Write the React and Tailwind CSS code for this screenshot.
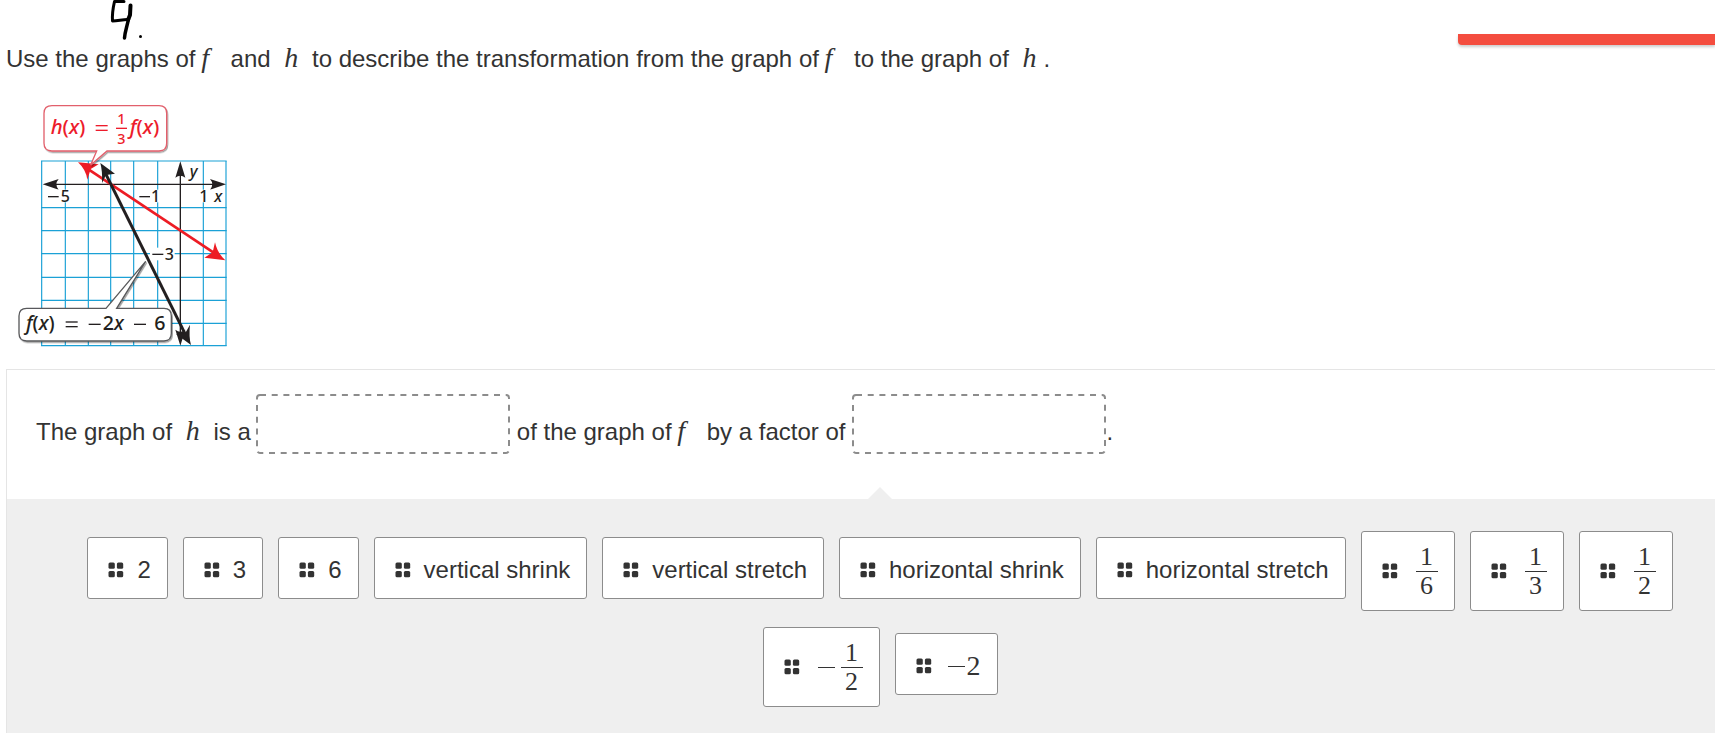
import React from "react";

const TILES = [
  { id: "two", label: "2" },
  { id: "three", label: "3" },
  { id: "six", label: "6" },
  { id: "v-shrink", label: "vertical shrink" },
  { id: "v-stretch", label: "vertical stretch" },
  { id: "h-shrink", label: "horizontal shrink" },
  { id: "h-stretch", label: "horizontal stretch" },
  { id: "sixth", fraction: [1, 6] },
  { id: "third", fraction: [1, 3] },
  { id: "half", fraction: [1, 2] },
  { id: "neg-half", negative: true, fraction: [1, 2] },
  { id: "neg-two", negative: true, math: "2" },
];

const GRID_X = [125, 196, 265, 332, 401, 473, 610, 678];
const GRID_Y = [198, 338, 407, 476, 547, 616, 685, 752];

function MathF() {
  return (
    <i className="-ml-px mr-[15px] font-['Liberation_Serif',serif] text-[28px] leading-none">f</i>
  );
}

function MathH() {
  return (
    <i className="mx-[7px] font-['Liberation_Serif',serif] text-[28px] leading-none">h</i>
  );
}

function HandwrittenNumber() {
  return (
    <svg
      className="ml-[104px] block"
      width="40"
      height="44"
      viewBox="110 0 40 44"
      fill="none"
      stroke="#000"
      strokeLinecap="round"
      strokeLinejoin="round"
      aria-label="4."
    >
      <path d="M124 1.500L114.500 1.500C113 8 112 14 112.500 21C118 21 122 19.500 127.500 19.500" strokeWidth="3" />
      <path d="M130.500 5.500L130 15L128 20" strokeWidth="4" />
      <path d="M128.500 19C127 27 125 31 124.500 38" strokeWidth="3.500" />
      <circle cx="140.500" cy="36.500" r="1.500" fill="#000" stroke="none" />
    </svg>
  );
}

function Graph() {
  return (
    <svg
      className="block font-['Noto_Sans','Open_Sans',sans-serif] font-medium"
      width="250"
      height="260"
      viewBox="0 0 750 780"
      role="img"
      aria-label="Graphs of f and h"
    >
      <defs>
        <filter id="callout" x="-10%" y="-10%" width="120%" height="130%">
          <feDropShadow dx="3" dy="4" stdDeviation="2" floodColor="#000" floodOpacity="0.35" />
        </filter>
      </defs>

      {/* Grid */}
      <g stroke="#1ba1d6" strokeWidth="3.500">
        {GRID_X.map((x) => (
          <line key={x} x1={x} x2={x} y1="198" y2="752" />
        ))}
        {GRID_Y.map((y) => (
          <line key={y} x1="123" x2="680" y1={y} y2={y} />
        ))}
      </g>

      {/* Axes */}
      <g stroke="#231f20" strokeWidth="4">
        <line x1="150" x2="660" y1="268" y2="268" />
        <line x1="541" x2="541" y1="220" y2="735" />
      </g>
      <g fill="#231f20">
        <path d="M128 268L176 252Q162 268 176 284Z" />
        <path d="M678 268L630 252Q644 268 630 284Z" />
        <path d="M541 199L526 248Q541 236 556 248Z" />
        <path d="M541 752L526 704Q541 716 556 704Z" />
      </g>

      {/* Axis labels */}
      <g fill="#fff">
        <rect x="140" y="284" width="70" height="38" />
        <rect x="413" y="284" width="68" height="38" />
        <rect x="598" y="284" width="72" height="38" />
        <rect x="450" y="458" width="74" height="38" />
        <rect x="566" y="206" width="32" height="48" />
      </g>
      <g fill="#231f20" fontSize="48">
        <text x="182" y="320">5</text>
        <text x="453" y="320">1</text>
        <text x="598" y="320">1</text>
        <text x="643" y="320" fontStyle="italic">x</text>
        <text x="569" y="245" fontStyle="italic">y</text>
        <text x="494" y="494">3</text>
        <rect x="144" y="303" width="32" height="4" />
        <rect x="418" y="303" width="32" height="4" />
        <rect x="457" y="476" width="33" height="4" />
      </g>

      {/* h(x) */}
      <line x1="252" y1="214" x2="650" y2="479" stroke="#ed1c24" strokeWidth="8" />
      <path d="M234 202L296 208L272 222L262 254Q258 224 234 202Z" fill="#ed1c24" />
      <path d="M676 496L613 488L638 472L645 442Q652 474 676 496Z" fill="#ed1c24" />

      {/* f(x) */}
      <line x1="312" y1="226" x2="562" y2="730" stroke="#231f20" strokeWidth="9" />
      <path d="M301 204L345 236L318 240L306 264Q308 230 301 204Z" fill="#231f20" />
      <path d="M573 750L528 717L556 714L570 689Q566 724 573 750Z" fill="#231f20" />

      {/* h(x) callout */}
      <path
        d="M156 32H477Q500 32 500 55V145Q500 168 477 168H321L272 210L290 168H156Q132 168 132 145V55Q132 32 156 32Z"
        fill="#fff"
        stroke="#e2606c"
        strokeWidth="4"
        filter="url(#callout)"
      />
      <g fill="#ed1c2c" fontSize="61">
        <text x="152" y="118">
          <tspan fontStyle="italic">h</tspan>(<tspan fontStyle="italic">x</tspan>)
        </text>
        <rect x="287" y="90" width="36" height="4" />
        <rect x="287" y="104" width="36" height="4" />
        <text x="352" y="88" fontSize="43">1</text>
        <text x="352" y="148" fontSize="43">3</text>
        <rect x="348" y="98" width="33" height="4" />
        <text x="389" y="118">
          <tspan fontStyle="italic">f</tspan>(<tspan fontStyle="italic">x</tspan>)
        </text>
      </g>

      {/* f(x) callout */}
      <path
        d="M80 640H318L437 499L350 640H492Q514 640 514 663V715Q514 738 492 738H80Q57 738 57 715V663Q57 640 80 640Z"
        fill="#fff"
        stroke="#58595b"
        strokeWidth="4"
        filter="url(#callout)"
      />
      <g fill="#231f20" fontSize="59">
        <text x="78" y="706">
          <tspan fontStyle="italic">f</tspan>(<tspan fontStyle="italic">x</tspan>)
        </text>
        <rect x="197" y="679" width="36" height="4" />
        <rect x="197" y="693" width="36" height="4" />
        <rect x="266" y="686" width="36" height="4" />
        <text x="308" y="706">
          2<tspan fontStyle="italic">x</tspan>
        </text>
        <rect x="402" y="686" width="36" height="4" />
        <text x="463" y="706">6</text>
      </g>
    </svg>
  );
}

function Minus() {
  return <span aria-label="minus" className="h-px w-[17px] bg-[#333]" />;
}

function DragHandle() {
  return (
    <svg width="16" height="16" viewBox="0 0 16 16" fill="#333" aria-hidden="true" className="shrink-0">
      <rect x="0.500" y="0.500" width="6.300" height="6.300" rx="1.500" />
      <rect x="8.900" y="0.500" width="6.300" height="6.300" rx="1.500" />
      <rect x="0.500" y="8.900" width="6.300" height="6.300" rx="1.500" />
      <rect x="8.900" y="8.900" width="6.300" height="6.300" rx="1.500" />
    </svg>
  );
}

function DropZone({ label }) {
  return (
    <button type="button" aria-label={label} className="h-[60px] w-[254px] shrink-0 bg-white">
      {/* Long, evenly spaced dashes that a CSS dashed border cannot give */}
      <svg className="block" width="254" height="60" viewBox="0 0 254 60" aria-hidden="true">
        <rect
          x="1"
          y="1"
          width="252"
          height="58"
          rx="3"
          fill="none"
          stroke="#8c8c8c"
          strokeWidth="2"
          strokeDasharray="6 5.700"
        />
      </svg>
    </button>
  );
}

function Tile({ label, math, negative, fraction }) {
  if (fraction) {
    return (
      <button
        type="button"
        className="flex h-20 cursor-grab items-center rounded-[3px] border border-[#8c8c8c] bg-white pl-5 pr-4 font-['Liberation_Serif',serif] text-[26px] leading-7"
      >
        <DragHandle />
        <span className="ml-[18px] flex items-center gap-1.5">
          {negative && <Minus />}
          <span className="flex w-[22px] flex-col items-center">
            <span className="w-full border-b border-[#333]">{fraction[0]}</span>
            <span>{fraction[1]}</span>
          </span>
        </span>
      </button>
    );
  }

  return (
    <button
      type="button"
      className="mt-1.5 flex h-[62px] cursor-grab items-center rounded-[3px] border border-[#8c8c8c] bg-white pl-5 pr-4 pt-1"
    >
      <DragHandle />
      {math ? (
        <span className="ml-4 flex items-center gap-0.5 font-['Liberation_Serif',serif] text-[28px] leading-7">
          {negative && <Minus />}
          {math}
        </span>
      ) : (
        <span className="ml-[13px] whitespace-nowrap">{label}</span>
      )}
    </button>
  );
}

export default function App() {
  return (
    <main className="relative min-h-screen overflow-hidden bg-white font-['Liberation_Sans',Arial,sans-serif] text-2xl leading-7 text-[#333]">
      {/* Alert strip */}
      <div className="absolute right-0 top-[34px] h-[11px] w-[257px] rounded-bl bg-[#f44d3f] shadow-[0_2px_3px_rgba(0,0,0,0.2)]" />

      <header className="pl-1.5">
        <HandwrittenNumber />
        <p>
          Use the graphs of <MathF /> and <MathH /> to describe the transformation from the graph of{" "}
          <MathF /> to the graph of <MathH />.
        </p>
      </header>

      <div className="mt-[22px]">
        <Graph />
      </div>

      {/* The question card is wider than the window and runs off its right edge */}
      <section className="-mr-[38px] ml-1.5 mt-3.5 border-l border-t border-[#e5e5e5]">
        <div className="flex h-[129px] items-start pl-[29px] pt-6">
          <div className="flex items-end">
            <p className="mr-[5px] whitespace-nowrap pb-2">
              The graph of <MathH /> is a
            </p>
            <DropZone label="Transformation" />
            <p className="mx-[7px] whitespace-nowrap pb-2">
              of the graph of <MathF /> by a factor of
            </p>
            <DropZone label="Factor" />
            <p className="pb-2">.</p>
          </div>
        </div>

        <div className="relative bg-[#efefef] px-16 pb-[60px] pt-8">
          <svg
            className="absolute -top-3 left-1/2 -translate-x-1/2"
            width="26"
            height="13"
            viewBox="0 0 26 13"
            aria-hidden="true"
          >
            <path d="M0 13L13 0L26 13Z" fill="#efefef" />
          </svg>
          <div className="flex flex-wrap items-start justify-center gap-x-[15px] gap-y-4">
            {TILES.map((tile) => (
              <Tile key={tile.id} {...tile} />
            ))}
          </div>
        </div>
      </section>
    </main>
  );
}
